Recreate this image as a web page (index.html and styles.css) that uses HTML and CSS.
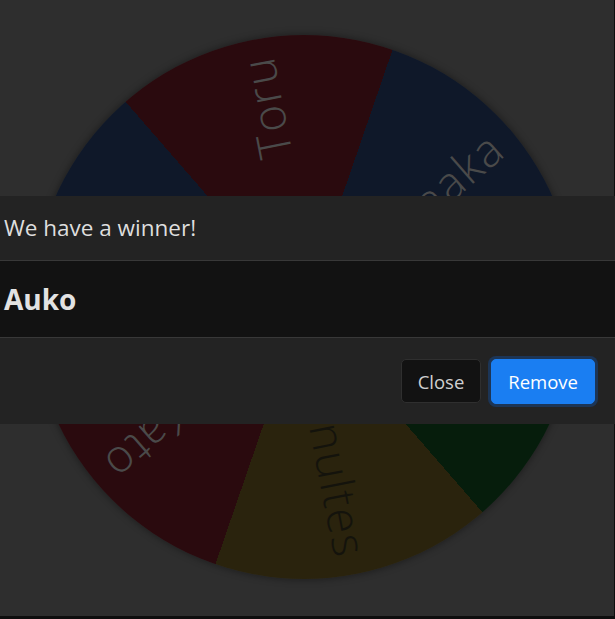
FILE: index.html
```html
<!DOCTYPE html>
<html lang="en">
<head>
<meta charset="utf-8">
<title>Wheel</title>
<link rel="stylesheet" href="styles.css">
</head>
<body>
<div class="page">
  <div class="wheel">
    <div class="label on-dark seg1">Toru</div>
    <div class="label on-dark seg2">Tanaka</div>
    <div class="label on-dark seg3">Auko</div>
    <div class="label on-light seg4">Minultes</div>
    <div class="label on-dark seg5">Kato</div>
    <div class="label on-dark seg6">Emi</div>
  </div>
</div>
<div class="modal">
  <div class="modal-header">
    <h5 class="modal-title">We have a winner!</h5>
  </div>
  <div class="modal-body">
    <h2 class="winner">Auko</h2>
  </div>
  <div class="modal-footer">
    <button class="btn btn-close">Close</button>
    <button class="btn btn-remove">Remove</button>
  </div>
</div>
</body>
</html>
```

FILE: styles.css
```css
html {
  background: #0e0e0e;
}
body {
  margin: 0;
  font-family: "Open Sans", "Noto Sans", sans-serif;
}
.page {
  width: 614px;
  height: 616px;
  background: #2e2e2e;
  overflow: hidden;
  padding-top: 35px;
  box-sizing: border-box;
}
.wheel {
  position: relative;
  width: 544px;
  height: 544px;
  margin-left: 32px;
  border-radius: 50%;
  overflow: hidden;
  box-shadow: 0 0 7px 1px rgba(0, 0, 0, 0.35);
  background: conic-gradient(from -41deg,
    #2a0a0e 0deg 60deg,
    #0f1829 60deg 120deg,
    #061d0c 120deg 180deg,
    #2a230d 180deg 240deg,
    #2a0a0e 240deg 300deg,
    #0f1829 300deg 360deg);
}
.label {
  position: absolute;
  left: 50%;
  top: 50%;
  width: 254px;
  height: 60px;
  margin-top: -30px;
  line-height: 60px;
  text-align: right;
  transform-origin: 0 50%;
  font-family: "Open Sans", sans-serif;
  font-weight: 300;
  font-size: 46px;
  letter-spacing: 1.5px;
  white-space: nowrap;
}
.on-dark { color: #4a4a4a; }
.on-light { color: #14130c; }
.seg1 { transform: rotate(-101deg); }
.seg2 { transform: rotate(-41deg); }
.seg3 { transform: rotate(19deg); }
.seg4 { transform: rotate(79deg); }
.seg5 { transform: rotate(139deg); }
.seg6 { transform: rotate(199deg); }

.modal {
  position: fixed;
  left: 0;
  right: 0;
  top: 196px;
  color: #dedede;
}
.modal-header {
  background: #232323;
  padding: 16px 4px;
  border-bottom: 1px solid #383838;
}
.modal-title {
  margin: 0;
  font-size: 22.5px;
  font-weight: 400;
  line-height: 32px;
}
.modal-body {
  background: #121212;
  padding: 16px 4px;
  border-bottom: 1px solid #383838;
}
.winner {
  margin: 0;
  font-size: 28px;
  font-weight: 700;
  line-height: 44px;
  color: #e2e2e2;
}
.modal-footer {
  background: #232323;
  height: 86px;
  padding: 0 20px 0 0;
  display: flex;
  align-items: center;
  justify-content: flex-end;
  gap: 10px;
}
.btn {
  font-family: "Open Sans", sans-serif;
  font-size: 18.5px;
  height: 45px;
  padding: 0 16px;
  border-radius: 5px;
  border: 1px solid transparent;
  cursor: pointer;
}
.btn-close {
  background: #121212;
  border-color: #2f2f2f;
  color: #cfcfcf;
  height: 44px;
}
.btn-remove {
  background: #1a7ef2;
  border-color: #1a7ef2;
  color: #ffffff;
  box-shadow: 0 0 0 3px #1c3556;
}
```
